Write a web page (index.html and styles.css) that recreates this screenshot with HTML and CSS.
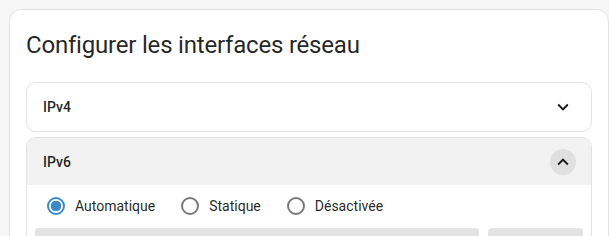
FILE: index.html
```html
<!DOCTYPE html>
<html lang="fr">
<head>
    <meta charset="UTF-8">
    <meta name="viewport" content="width=device-width, initial-scale=1.0">
    <title>Interfaces réseau</title>
    <link rel="stylesheet" href="styles.css">
</head>
<body>
    <div class="card">
        <h2 class="card-title">Configurer les interfaces réseau</h2>

        <div class="accordion">
            <div class="accordion-header">
                <span class="accordion-label">IPv4</span>
                <span class="expand-icon">
                    <svg viewBox="0 0 24 24" width="24" height="24"><path d="M16.59 8.59 12 13.17 7.41 8.59 6 10l6 6 6-6z"/></svg>
                </span>
            </div>
        </div>

        <div class="accordion open">
            <div class="accordion-header">
                <span class="accordion-label">IPv6</span>
                <span class="expand-icon">
                    <svg viewBox="0 0 24 24" width="24" height="24"><path d="m12 8-6 6 1.41 1.41L12 10.83l4.59 4.58L18 14z"/></svg>
                </span>
            </div>
            <div class="accordion-details">
                <div class="radio-group">
                    <label class="radio checked"><span class="radio-circle"></span>Automatique</label>
                    <label class="radio"><span class="radio-circle"></span>Statique</label>
                    <label class="radio"><span class="radio-circle"></span>Désactivée</label>
                </div>
                <div class="field-row">
                    <div class="field field-address"></div>
                    <div class="field field-prefix"></div>
                </div>
            </div>
        </div>
    </div>
</body>
</html>
```

FILE: styles.css
```css
body {
    margin: 0;
    padding: 9px 0 0 9px;
    background: #f6f6f6;
    font-family: Roboto, "Liberation Sans", sans-serif;
    color: rgba(0, 0, 0, 0.87);
    overflow: hidden;
}

.card {
    box-sizing: border-box;
    width: 600px;
    background: #fff;
    border: 1px solid #e2e2e2;
    border-radius: 12px;
    padding: 19px 16px 16px;
}

.card-title {
    margin: 0 0 21px;
    font-size: 24px;
    font-weight: 400;
    line-height: 32px;
    letter-spacing: -0.2px;
}

.accordion {
    border: 1px solid #e2e2e2;
    border-radius: 10px;
    overflow: hidden;
    margin-bottom: 5px;
}

.accordion-header {
    display: flex;
    align-items: center;
    justify-content: space-between;
    height: 48px;
    padding: 0 16px;
}

.accordion-label {
    font-size: 14px;
    font-weight: 500;
}

.expand-icon {
    display: flex;
    align-items: center;
    justify-content: center;
    width: 24px;
    height: 24px;
}

.expand-icon svg {
    width: 22px;
    height: 22px;
    fill: #1c1c1c;
}

.open .accordion-header {
    background: #f2f2f2;
    height: 47px;
}

.open .expand-icon {
    width: 26px;
    height: 26px;
    margin-right: -1px;
    border-radius: 50%;
    background: #e0e0e0;
}

.accordion-details {
    padding: 0 8px;
}

.radio-group {
    display: flex;
    align-items: center;
    height: 42px;
    padding-left: 12px;
    margin-bottom: 1px;
}

.radio {
    display: flex;
    align-items: center;
    gap: 10px;
    margin-right: 26px;
    font-size: 14px;
}

.radio-circle {
    box-sizing: border-box;
    width: 18px;
    height: 18px;
    border: 2px solid #7a7a7a;
    border-radius: 50%;
}

.radio.checked .radio-circle {
    border-color: #3a8bc6;
    background: radial-gradient(circle, #3a8bc6 0 5px, transparent 5.5px);
}

.field-row {
    display: flex;
    gap: 9px;
}

.field {
    height: 30px;
    background: #e3e3e3;
    border-radius: 4px 4px 0 0;
}

.field-address {
    flex: 1;
}

.field-prefix {
    width: 95px;
}
```
